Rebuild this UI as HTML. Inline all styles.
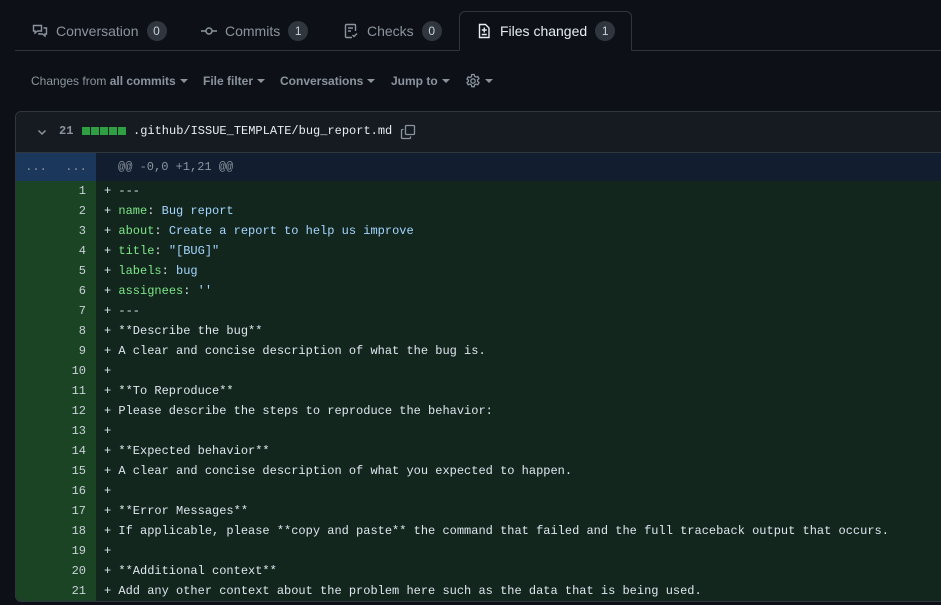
<!DOCTYPE html>
<html><head><meta charset="utf-8"><style>
*{box-sizing:border-box;margin:0;padding:0}
body{width:941px;height:605px;overflow:hidden;background:#0d1117;font-family:"Liberation Sans",sans-serif;color:#c9d1d9;position:relative}
.tabs{position:absolute;left:15px;right:0;top:0;height:51px;border-bottom:1px solid #30363d}
.tab{position:absolute;top:11px;height:40px;display:flex;align-items:center;font-size:14px;color:#8b949e}
.tab svg{margin-right:8px}
.cnt{display:inline-block;margin-left:8px;background:#30363d;color:#c9d1d9;border-radius:10px;font-size:12px;height:20px;line-height:20px;min-width:20px;text-align:center;padding:0 6px}
.tab.act{left:444px;width:173px;border:1px solid #30363d;border-bottom:1px solid #0d1117;border-radius:6px 6px 0 0;background:#0d1117;color:#e6edf3;padding-left:16px}
.tb{position:absolute;top:74px;font-size:12px;color:#8b949e;display:flex;align-items:center}
.tb b{color:#8b949e}
.car{display:inline-block;width:0;height:0;border-left:4px solid transparent;border-right:4px solid transparent;border-top:4px solid #8b949e;margin-left:4px}
.box{position:absolute;left:15px;top:111px;width:940px;height:491px;border:1px solid #30363d;border-radius:6px;overflow:hidden}
.hdr{height:41px;background:#161b22;border-bottom:1px solid #30363d;position:relative;font-family:"Liberation Mono",monospace;font-size:12px}
.hunk{height:28px;display:flex;font-family:"Liberation Mono",monospace;font-size:12px;line-height:28px}
.hunk .n{width:80px;background:#1c375c;color:#8b949e;display:flex;justify-content:space-around}
.hunk .c{flex:1;background:#121d2f;color:#8b949e;padding-left:22px}
.row{height:20px;display:flex;font-family:"Liberation Mono",monospace;font-size:12px;line-height:20px}
.row .n{width:80px;background:#1b4424;color:#c9d1d9;text-align:right;padding-right:10px}
.row .c{flex:1;background:#12261e;color:#dfe6ee;padding-left:8px;white-space:pre}
.k{color:#7ee787}.v{color:#a5d6ff}
</style></head><body>
<div class="tabs">
 <div class="tab" style="left:17px"><svg width="16" height="16" viewBox="0 0 16 16" fill="none" stroke="#8b949e" stroke-width="1.4"><path d="M1.5 2.5h8v5.5h-4l-2.5 2v-2h-1.5z"/><path d="M11.5 5h3v6h-1.5v2l-2.5-2h-3.5v-1"/></svg>Conversation<span class="cnt">0</span></div>
 <div class="tab" style="left:186px"><svg width="16" height="16" viewBox="0 0 16 16" fill="none" stroke="#8b949e" stroke-width="1.5"><circle cx="8" cy="8" r="3"/><path d="M0 8h5M11 8h5"/></svg>Commits<span class="cnt">1</span></div>
 <div class="tab" style="left:328px"><svg width="16" height="16" viewBox="0 0 16 16" fill="none" stroke="#8b949e" stroke-width="1.4"><path d="M9 14.5H3.5a1 1 0 0 1-1-1v-11a1 1 0 0 1 1-1h8a1 1 0 0 1 1 1V8"/><path d="M5 5h5M5 8h3M9.5 12l1.5 1.5 3-3"/></svg>Checks<span class="cnt">0</span></div>
 <div class="tab act"><svg width="16" height="16" viewBox="0 0 16 16" fill="none" stroke="#e6edf3" stroke-width="1.4"><path d="M3.5 1.5h6l3.5 3.5v9.5h-9.5z"/><path d="M8.25 4.5v5M5.75 7h5M5.75 11.5h5"/></svg>Files changed<span class="cnt">1</span></div>
</div>
<div class="tb" style="left:31px">Changes from&nbsp;<b>all commits</b><span class="car"></span></div>
<div class="tb" style="left:203px"><b>File filter</b><span class="car"></span></div>
<div class="tb" style="left:280px"><b>Conversations</b><span class="car"></span></div>
<div class="tb" style="left:391px"><b>Jump to</b><span class="car"></span></div>
<div class="tb" style="left:465px;top:73px"><svg width="16" height="16" viewBox="0 0 16 16" fill="none" stroke="#8b949e" stroke-width="1.3"><circle cx="8" cy="8" r="2.2"/><path d="M6.8 1.5h2.4l.4 1.8 1.4.8 1.8-.6 1.2 2.1-1.4 1.2v1.6l1.4 1.2-1.2 2.1-1.8-.6-1.4.8-.4 1.8H6.8l-.4-1.8-1.4-.8-1.8.6-1.2-2.1 1.4-1.2V7.2L2 6l1.2-2.1 1.8.6 1.4-.8z"/></svg><span class="car"></span></div>
<div class="box">
 <div class="hdr">
  <svg style="position:absolute;left:20px;top:14px" width="12" height="12" viewBox="0 0 12 12" fill="none" stroke="#8b949e" stroke-width="1.5"><path d="M2.5 4.5l3.5 3.5 3.5-3.5"/></svg>
  <span style="position:absolute;left:43px;top:12px;color:#8b949e;font-weight:bold">21</span>
  <span style="position:absolute;left:66px;top:15px;display:flex;gap:1px"><i style="width:8px;height:8px;background:#2ea043"></i><i style="width:8px;height:8px;background:#2ea043"></i><i style="width:8px;height:8px;background:#2ea043"></i><i style="width:8px;height:8px;background:#2ea043"></i><i style="width:8px;height:8px;background:#2ea043"></i></span>
  <span style="position:absolute;left:117px;top:12px;color:#e6edf3">.github/ISSUE_TEMPLATE/bug_report.md</span>
  <svg style="position:absolute;left:384px;top:12px" width="16" height="16" viewBox="0 0 16 16" fill="none" stroke="#8b949e" stroke-width="1.3"><rect x="5.5" y="1.5" width="9" height="9" rx="1"/><path d="M3.5 5.5h-1a1 1 0 0 0-1 1v7a1 1 0 0 0 1 1h7a1 1 0 0 0 1-1v-1"/></svg>
 </div>
 <div class="hunk"><div class="n"><span>...</span><span>...</span></div><div class="c">@@ -0,0 +1,21 @@</div></div>
 <div class="row"><div class="n">1</div><div class="c">+ ---</div></div>
 <div class="row"><div class="n">2</div><div class="c">+ <span class="k">name</span>: <span class="v">Bug report</span></div></div>
 <div class="row"><div class="n">3</div><div class="c">+ <span class="k">about</span>: <span class="v">Create a report to help us improve</span></div></div>
 <div class="row"><div class="n">4</div><div class="c">+ <span class="k">title</span>: <span class="v">"[BUG]"</span></div></div>
 <div class="row"><div class="n">5</div><div class="c">+ <span class="k">labels</span>: <span class="v">bug</span></div></div>
 <div class="row"><div class="n">6</div><div class="c">+ <span class="k">assignees</span>: <span class="v">''</span></div></div>
 <div class="row"><div class="n">7</div><div class="c">+ ---</div></div>
 <div class="row"><div class="n">8</div><div class="c">+ **Describe the bug**</div></div>
 <div class="row"><div class="n">9</div><div class="c">+ A clear and concise description of what the bug is.</div></div>
 <div class="row"><div class="n">10</div><div class="c">+</div></div>
 <div class="row"><div class="n">11</div><div class="c">+ **To Reproduce**</div></div>
 <div class="row"><div class="n">12</div><div class="c">+ Please describe the steps to reproduce the behavior:</div></div>
 <div class="row"><div class="n">13</div><div class="c">+</div></div>
 <div class="row"><div class="n">14</div><div class="c">+ **Expected behavior**</div></div>
 <div class="row"><div class="n">15</div><div class="c">+ A clear and concise description of what you expected to happen.</div></div>
 <div class="row"><div class="n">16</div><div class="c">+</div></div>
 <div class="row"><div class="n">17</div><div class="c">+ **Error Messages**</div></div>
 <div class="row"><div class="n">18</div><div class="c">+ If applicable, please **copy and paste** the command that failed and the full traceback output that occurs.</div></div>
 <div class="row"><div class="n">19</div><div class="c">+</div></div>
 <div class="row"><div class="n">20</div><div class="c">+ **Additional context**</div></div>
 <div class="row"><div class="n">21</div><div class="c">+ Add any other context about the problem here such as the data that is being used.</div></div>
</div>
</body></html>
